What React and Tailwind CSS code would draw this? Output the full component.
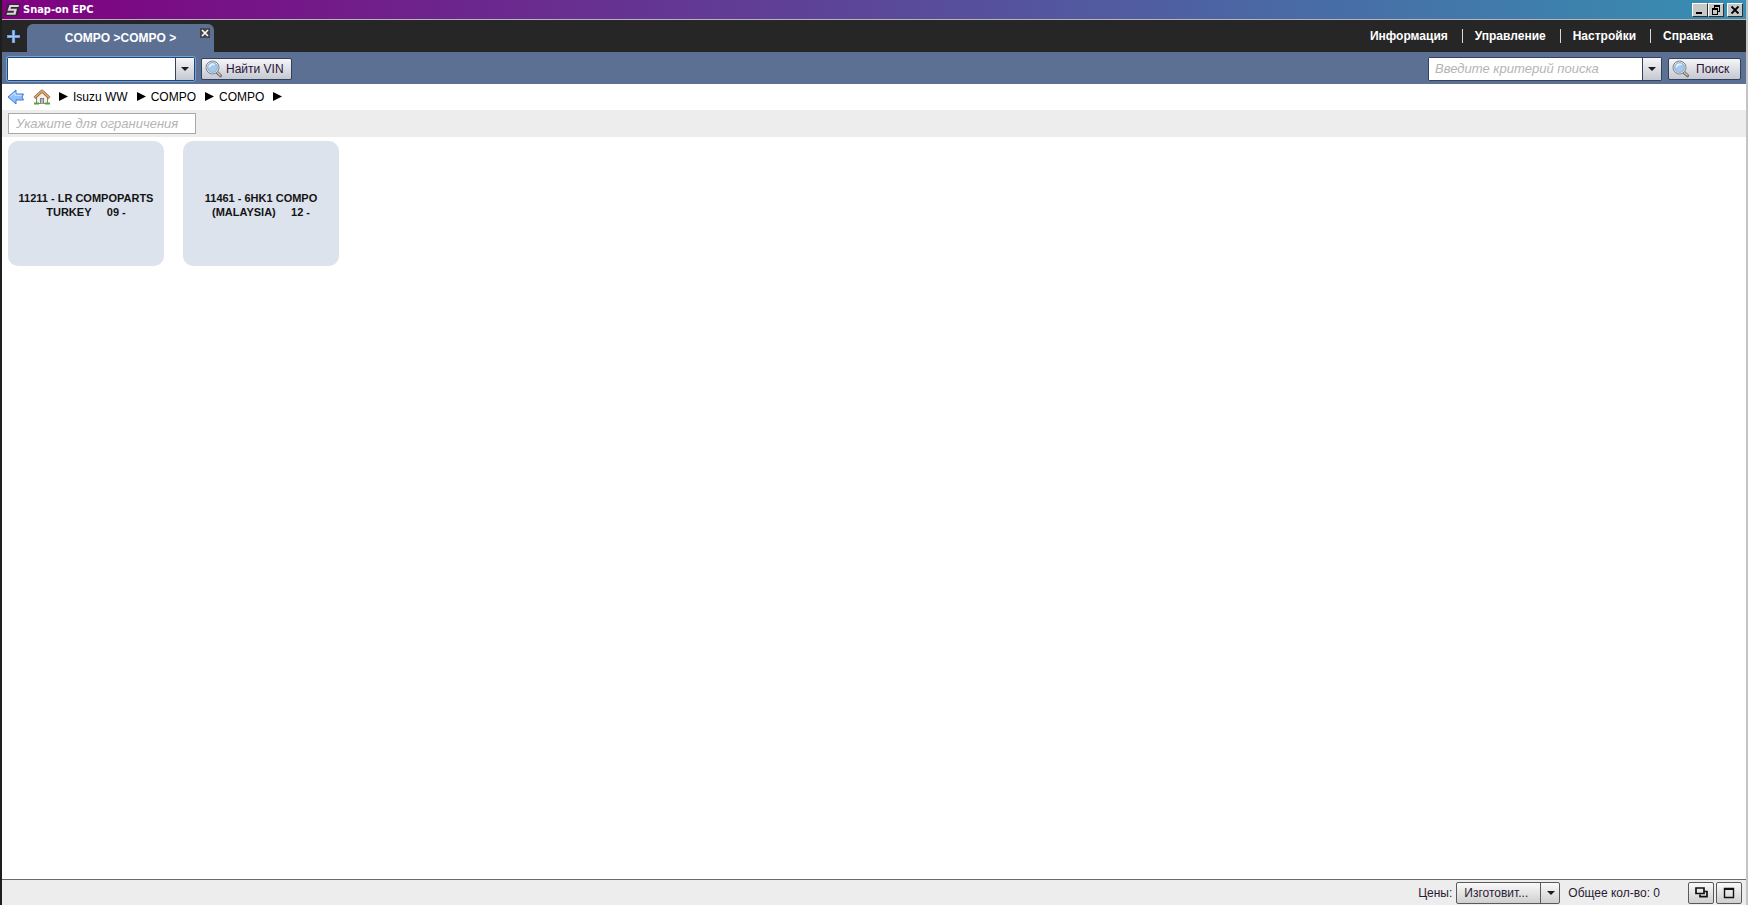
import React, { useState } from 'react';

const menuItems = ['Информация', 'Управление', 'Настройки', 'Справка'];
const crumbs = ['Isuzu WW', 'COMPO', 'COMPO'];
const catalogs = [
    { id: '11211', lines: ['11211 - LR COMPOPARTS', 'TURKEY\u00a0\u00a0\u00a0\u00a0 09 -'] },
    { id: '11461', lines: ['11461 - 6HK1 COMPO', '(MALAYSIA)\u00a0\u00a0\u00a0\u00a0 12 -'] },
];

const buttonFace = 'bg-linear-to-b from-[#f6f6f8] to-[#c4c8d0] border border-[#33415c]';

const SnapOnLogo = () => (
    <svg width="15" height="12" viewBox="0 0 15 12" className="shrink-0">
        <path d="M3 0h12l-1 4H7.500l-.2.700H14L12 12H0l1-4h6.500l.2-.8H1z" fill="#2a2a2a" />
        <path d="M4.500 1h9.500l-.5 2H6L5.500 4.800H12L10.500 10.800H1.500L2 8.800h6.500L9 6.800H2.500z" fill="#d8d8d8" />
    </svg>
);

const SearchIcon = () => (
    <svg width="18" height="18" viewBox="0 0 18 18" className="shrink-0">
        <path d="M11.500 12l4 3.700" stroke="#77716b" strokeWidth="3.200" strokeLinecap="round" />
        <path d="M12 12.200l3.300 3" stroke="#cbc5bb" strokeWidth="1.200" strokeLinecap="round" />
        <circle cx="7.500" cy="7.500" r="6.500" fill="#e4e7ea" stroke="#7d848c" />
        <circle cx="7.500" cy="7.500" r="4.900" fill="#a5c8ee" stroke="#7b9cc4" strokeWidth=".7" />
        <path d="M3.700 8a4 4 0 0 1 6.800-3.500C8.500 4.800 5.500 6 3.700 8z" fill="#e2f0fc" />
    </svg>
);

const BackIcon = () => (
    <svg width="18" height="16" viewBox="0 0 18 16">
        <path d="M1 8l8-7v4h7.500l-1.500 3 1.500 3H9v4z" fill="#8fc0fa" stroke="#3c78dc" strokeLinejoin="round" />
        <path d="M3.500 7.500L8 3.700V6.300h6.500" fill="none" stroke="#d3e8ff" />
    </svg>
);

const HomeIcon = () => (
    <svg width="18" height="16" viewBox="0 0 18 16">
        <path d="M3.500 8L9 3l5.500 5v6.500h-11z" fill="#f1efe9" stroke="#8d8578" />
        <path d="M1.500 9L9 2l7.500 7" fill="none" stroke="#8b5a2c" strokeWidth="3" strokeLinejoin="round" />
        <path d="M1.500 8.800L9 1.900l7.500 6.900" fill="none" stroke="#dfa56a" strokeWidth="1.700" />
        <path d="M7 9h4v5.500H7z" fill="#808080" />
        <path d="M8 10h2v4.500H8z" fill="#b9b9b9" />
        <path d="M1 14.500h5M12 14.500h5" stroke="#58a03c" strokeWidth="2" />
    </svg>
);

const DownArrow = () => (
    <svg width="8" height="4" viewBox="0 0 8 4">
        <path d="M0 0h8L4 4z" fill="#1c1c1c" />
    </svg>
);

const CrumbArrow = () => (
    <svg width="9" height="9" viewBox="0 0 9 9" className="shrink-0">
        <path d="M0 0l9 4.500L0 9z" fill="#000" />
    </svg>
);

const WindowButton = ({ label, children }) => (
    <button
        aria-label={label}
        className="flex h-[14px] w-4 items-center justify-center border border-t-white border-l-white border-r-[#303030] border-b-[#303030] bg-[#c8c8c8]"
    >
        <svg width="12" height="12" viewBox="0 0 12 12" fill="none" stroke="#000" className="shrink-0" shapeRendering="crispEdges">
            {children}
        </svg>
    </button>
);

const TitleBar = () => (
    <header className="flex h-5 items-center border-b border-[#b9b4bc] bg-linear-to-r/srgb from-[#800080] to-[#368fb2] px-[3px]">
        <SnapOnLogo />
        <h1 className="ml-[3px] flex-1 font-['DejaVu_Sans_Condensed','DejaVu_Sans',sans-serif] text-[11px] font-bold text-white">
            Snap-on EPC
        </h1>
        <WindowButton label="Свернуть">
            <path d="M2 9h6" strokeWidth="2" />
        </WindowButton>
        <WindowButton label="Восстановить">
            <path d="M4 2h6M2 5h6" strokeWidth="2" />
            <path d="M4.500 2v3M9.500 2v5.500H8M2.500 5v5.500h5V5" />
        </WindowButton>
        <div className="ml-[3px] flex">
            <WindowButton label="Закрыть">
                <path d="M2.500 2.500l7 7M9.500 2.500l-7 7" strokeWidth="1.800" shapeRendering="auto" />
            </WindowButton>
        </div>
    </header>
);

const TabBar = () => (
    <nav className="flex h-8 items-end bg-[#262626]">
        <button aria-label="Новая вкладка" className="flex h-8 w-[25px] items-center pl-1">
            <svg width="15" height="15" viewBox="0 0 15 15">
                <path d="M7.500 1v13M1 7.500h13" stroke="#6f9fe0" strokeWidth="3.200" />
                <path d="M7.500 2v11M2 7.500h11" stroke="#a5c8f6" strokeWidth="1.200" />
            </svg>
        </button>
        <div className="flex h-7 w-[187px] rounded-t-md bg-[#5b7093]">
            <button className="flex-1 pl-[14px] text-[12px] font-bold text-white">COMPO &gt;COMPO &gt;</button>
            <button aria-label="Закрыть вкладку" className="mt-1 mr-1 flex h-[10px] w-[10px] items-center justify-center bg-[#45464a]">
                <svg width="8" height="8" viewBox="0 0 8 8">
                    <path d="M1 1l6 6M7 1L1 7" stroke="#fff" strokeWidth="1.600" />
                </svg>
            </button>
        </div>
        <ul className="ml-auto flex h-8 items-center pr-[33px] text-[12px] font-bold text-white">
            {menuItems.map((item, i) => (
                <li key={item} className="flex items-center">
                    {i > 0 && <span className="mr-3 ml-[14px] h-[14px] w-px bg-[#d8d8d8]" />}
                    <a href="#">{item}</a>
                </li>
            ))}
        </ul>
    </nav>
);

const SearchBar = () => {
    const [vin, setVin] = useState('');
    const [query, setQuery] = useState('');

    return (
        <div className="flex h-8 items-center bg-[#5b7093] px-[5px] pt-[2px]">
            <div className="flex h-6 w-[188px] rounded-xs border border-[#33415c] outline-1 outline-[#62a8ee]">
                <input
                    aria-label="VIN"
                    value={vin}
                    onChange={(e) => setVin(e.target.value)}
                    className="min-w-0 flex-1 bg-white px-2 outline-none"
                />
                <button aria-label="Список VIN" className="flex w-[19px] items-center justify-center border-l border-[#33415c] bg-linear-to-b from-[#f6f6f8] to-[#c4c8d0]">
                    <DownArrow />
                </button>
            </div>
            <button className={`ml-[6px] flex h-[22px] w-[91px] items-center gap-[3px] rounded-xs pl-[3px] text-[#2b1238] ${buttonFace}`}>
                <SearchIcon />
                Найти VIN
            </button>
            <div className="ml-auto flex h-6 w-[234px] rounded-xs border border-[#33415c]">
                <input
                    aria-label="Поиск"
                    placeholder="Введите критерий поиска"
                    value={query}
                    onChange={(e) => setQuery(e.target.value)}
                    className="min-w-0 flex-1 bg-white pl-[6px] text-[13px] italic outline-none placeholder:text-[#b4b4b4]"
                />
                <button aria-label="История поиска" className="flex w-[19px] items-center justify-center border-l border-[#33415c] bg-linear-to-b from-[#f6f6f8] to-[#c4c8d0]">
                    <DownArrow />
                </button>
            </div>
            <button className={`ml-[6px] flex h-[22px] w-[73px] items-center gap-[6px] rounded-xs pl-[3px] text-[#2b1238] ${buttonFace}`}>
                <SearchIcon />
                Поиск
            </button>
        </div>
    );
};

const Breadcrumbs = () => (
    <div className="flex h-[26px] items-center pb-px pl-[5px] text-black">
        <button aria-label="Назад"><BackIcon /></button>
        <a href="#" aria-label="Домой" className="mr-2 ml-2"><HomeIcon /></a>
        <CrumbArrow />
        {crumbs.map((crumb, i) => (
            <React.Fragment key={i}>
                <a href="#" className="mr-[9px] ml-[5px]">{crumb}</a>
                <CrumbArrow />
            </React.Fragment>
        ))}
    </div>
);

const StatusBar = () => (
    <footer className="flex h-[26px] items-center border-t border-[#6a6a6a] bg-[#ededed] pr-1 text-[#2b1a33]">
        <label htmlFor="prices" className="ml-auto">Цены:</label>
        <div className="relative ml-1 h-[22px] w-[104px]">
            <select
                id="prices"
                className="h-full w-full appearance-none rounded-xs border border-[#5a5a5a] bg-linear-to-b from-[#fafafa] to-[#cfcfcf] pl-[7px]"
            >
                <option>Изготовит...</option>
            </select>
            <span className="pointer-events-none absolute inset-y-0 right-0 flex w-5 items-center justify-center border-l border-[#5a5a5a]">
                <DownArrow />
            </span>
        </div>
        <span className="ml-2">Общее кол-во: 0</span>
        <button aria-label="Каскад" className="ml-7 flex h-[22px] w-[26px] items-center justify-center rounded-xs border border-[#5a5a5a] bg-linear-to-b from-[#fafafa] to-[#cfcfcf]">
            <svg width="13" height="11" viewBox="0 0 13 11" fill="none" stroke="#111" strokeWidth="1.700">
                <path d="M5 7.500v2.200h7V4.500H9.500" />
                <path d="M1 1h8v5.500H1z" />
            </svg>
        </button>
        <button aria-label="Развернуть" className="ml-[2px] flex h-[22px] w-[26px] items-center justify-center rounded-xs border border-[#5a5a5a] bg-linear-to-b from-[#fafafa] to-[#cfcfcf]">
            <svg width="12" height="12" viewBox="0 0 12 12" fill="none" stroke="#111">
                <path d="M1.500 1.500h9v9h-9z" strokeWidth="1.400" />
                <path d="M1 2h10" strokeWidth="2" />
            </svg>
        </button>
    </footer>
);

const App = () => {
    const [filter, setFilter] = useState('');

    return (
        <div className="flex min-h-screen flex-col border-r-2 border-l-2 border-r-[#c4c4c4] border-l-[#1e1e1e] bg-white font-['Liberation_Sans',Arial,sans-serif] text-[12px] leading-[14px]">
            <TitleBar />
            <TabBar />
            <SearchBar />
            <Breadcrumbs />
            <div className="flex h-[27px] items-center bg-[#ededed] pl-[6px]">
                <input
                    aria-label="Фильтр"
                    placeholder="Укажите для ограничения"
                    value={filter}
                    onChange={(e) => setFilter(e.target.value)}
                    className="h-[21px] w-[188px] border border-[#a8a8a8] bg-white pl-[7px] text-[13px] italic outline-none placeholder:text-[#b4b4b4]"
                />
            </div>
            <main className="flex flex-1 flex-wrap content-start gap-[19px] pt-1 pl-[6px]">
                {catalogs.map(({ id, lines }) => (
                    <button key={id} className="h-[125px] w-[156px] rounded-[10px] bg-[#dce3ec] pt-[3px] text-[11px] font-bold text-[#141414]">
                        {lines.map((line) => (
                            <span key={line} className="block">{line}</span>
                        ))}
                    </button>
                ))}
            </main>
            <StatusBar />
        </div>
    );
};

export default App;
